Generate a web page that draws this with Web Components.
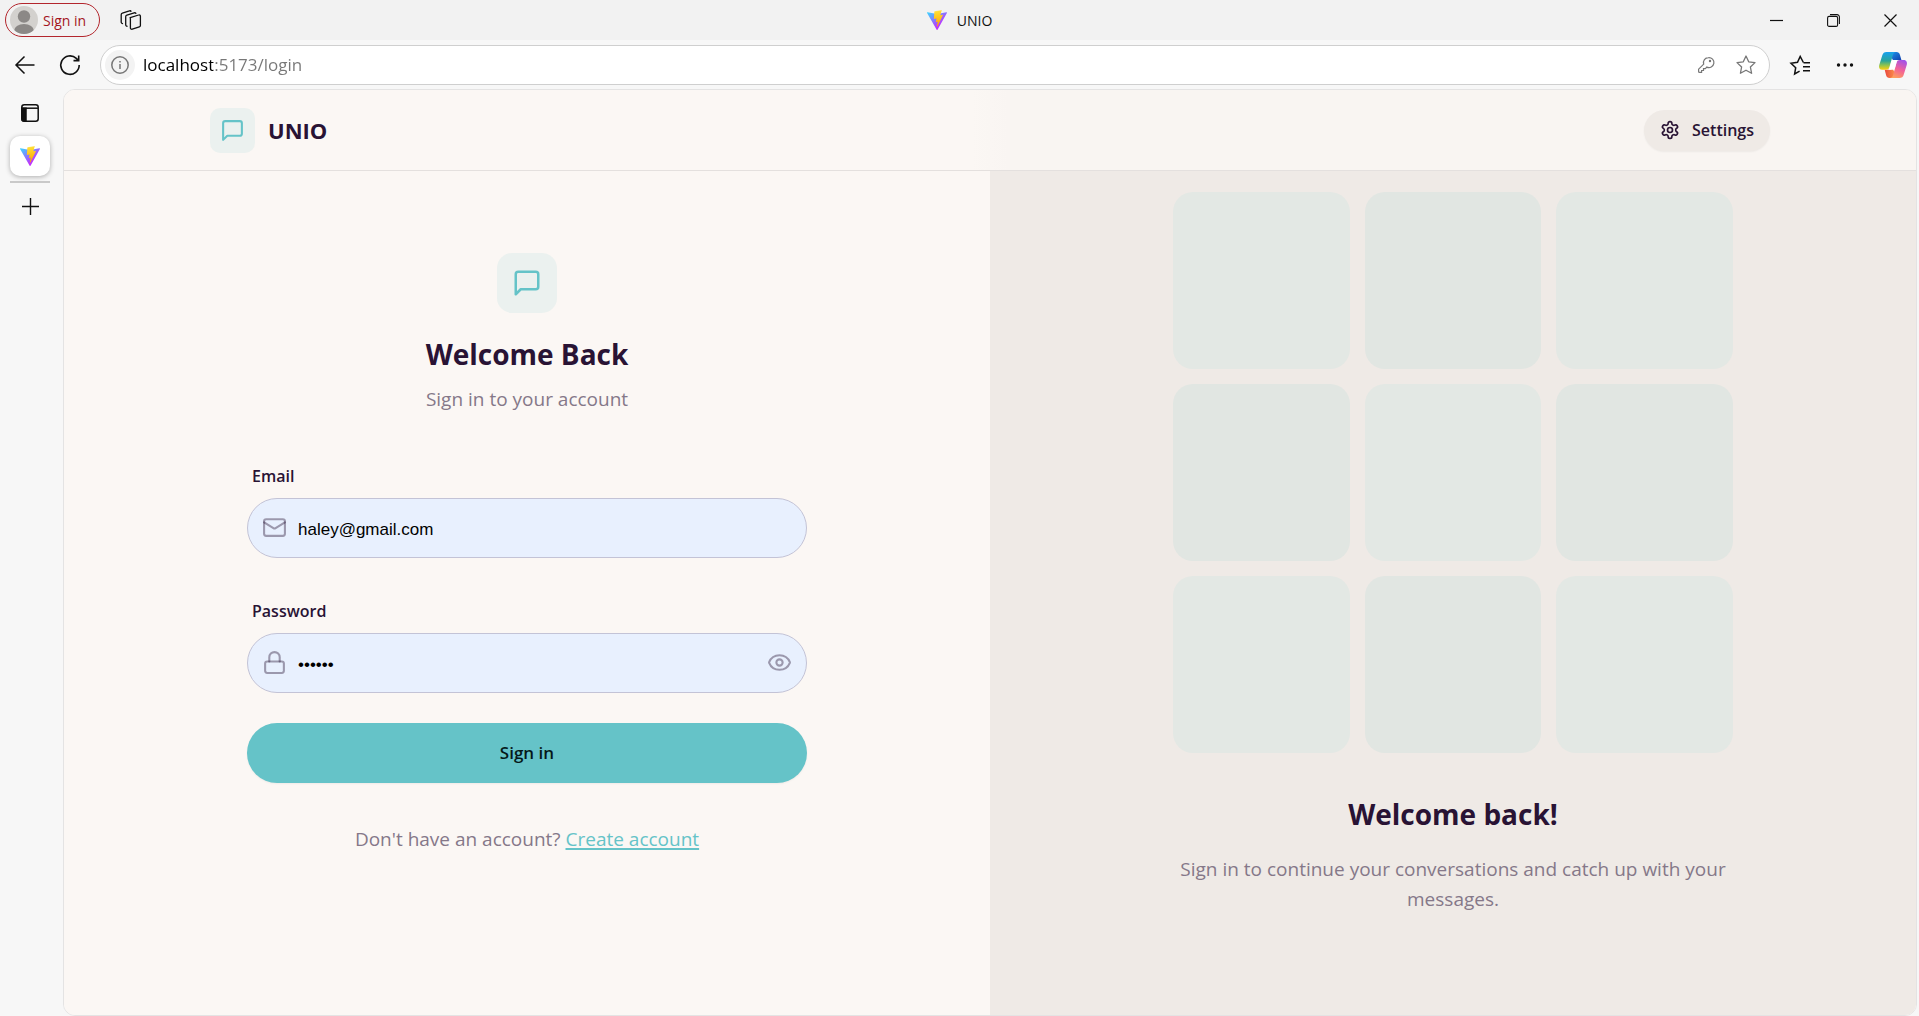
<!DOCTYPE html>
<html lang="en">
<head>
<meta charset="utf-8">
<title>UNIO</title>
<style>
html, body { height: 100%; margin: 0; }
body {
  --ink: #291334; --muted: #857889; --base: #fbf7f4; --base-2: #efeae6; --primary: #65c3c8;
  font-family: "Open Sans", "Noto Sans", sans-serif; color: #111; background: #f7f7f7;
}
</style>
</head>
<body>
<browser-window>
  <unio-app></unio-app>
</browser-window>

<script>
const define = (name, html, setup) => customElements.define(name, class extends HTMLElement {
  constructor() {
    super();
    this.attachShadow({ mode: 'open' });
  }
  connectedCallback() {
    if (this.shadowRoot.childNodes.length) return;
    const t = document.createElement('template');
    t.innerHTML = '<style>*{box-sizing:border-box}:host{display:block;box-sizing:border-box}button{font:inherit;color:inherit;border:0;background:none;padding:0;display:inline-flex;align-items:center;justify-content:center}</style>'
      + (typeof html === 'function' ? html(this) : html);
    this.shadowRoot.append(t.content.cloneNode(true));
    if (setup) setup(this, this.shadowRoot);
  }
});

/* name: [viewBox, stroke width, markup] */
const ICONS = {
  message: ['0 0 24 24', 2, '<path d="M21 15a2 2 0 0 1-2 2H7l-4 4V5a2 2 0 0 1 2-2h14a2 2 0 0 1 2 2z"/>'],
  settings: ['0 0 24 24', 2, '<path d="M12.22 2h-.44a2 2 0 0 0-2 2v.18a2 2 0 0 1-1 1.73l-.43.25a2 2 0 0 1-2 0l-.15-.08a2 2 0 0 0-2.73.73l-.22.38a2 2 0 0 0 .73 2.73l.15.1a2 2 0 0 1 1 1.72v.51a2 2 0 0 1-1 1.74l-.15.09a2 2 0 0 0-.73 2.73l.22.38a2 2 0 0 0 2.73.73l.15-.08a2 2 0 0 1 2 0l.43.25a2 2 0 0 1 1 1.73V20a2 2 0 0 0 2 2h.44a2 2 0 0 0 2-2v-.18a2 2 0 0 1 1-1.73l.43-.25a2 2 0 0 1 2 0l.15.08a2 2 0 0 0 2.73-.73l.22-.39a2 2 0 0 0-.73-2.73l-.15-.08a2 2 0 0 1-1-1.74v-.5a2 2 0 0 1 1-1.74l.15-.09a2 2 0 0 0 .73-2.73l-.22-.38a2 2 0 0 0-2.73-.73l-.15.08a2 2 0 0 1-2 0l-.43-.25a2 2 0 0 1-1-1.73V4a2 2 0 0 0-2-2z"/><circle cx="12" cy="12" r="3"/>'],
  mail: ['0 0 24 24', 2, '<rect width="20" height="16" x="2" y="4" rx="2"/><path d="m22 7-8.97 5.7a1.94 1.94 0 0 1-2.06 0L2 7"/>'],
  lock: ['0 0 24 24', 2, '<rect width="18" height="11" x="3" y="11" rx="2"/><path d="M7 11V7a5 5 0 0 1 10 0v4"/>'],
  eye: ['0 0 24 24', 2, '<path d="M2.06 12.35a1 1 0 0 1 0-.7 10.75 10.75 0 0 1 19.88 0 1 1 0 0 1 0 .7 10.75 10.75 0 0 1-19.88 0"/><circle cx="12" cy="12" r="3"/>'],
  workspaces: ['0 0 22 22', 1.3, '<path d="M10.2 8.7 18.6 6a1.3 1.3 0 0 1 1.8 1.2v9.2a1.6 1.6 0 0 1-1.1 1.5l-7 2.3a1.4 1.4 0 0 1-1.9-1.3V9.6z"/><path d="M7.500 17.200A1.400 1.400 0 0 1 5.700 16V7.800a1.700 1.700 0 0 1 1.200-1.600l7.300-2.400a1.400 1.400 0 0 1 1.800 1"/><path d="M3 14.500A1.400 1.400 0 0 1 1.200 13.300V5.800a1.700 1.700 0 0 1 1.200-1.600l7-2.300a1.400 1.400 0 0 1 1.800 .8"/>'],
  back: ['0 0 20 20', 1.5, '<path d="M19.500 10H1M9.500 1.500 1 10l8.500 8.500"/>'],
  reload: ['0 0 20 20', 1.6, '<path d="M19.200 10A9.200 9.200 0 1 1 16.300 3.400L18.500 5.500M18.700 .5V5.600H13.500"/>'],
  info: ['0 0 18 18', 1.5, '<circle cx="9" cy="9" r="8.200"/><path d="M9 8v5M9 5v1.400"/>'],
  key: ['0 0 16 16', 1.2, '<path d="M10.400 .6a5 5 0 0 0-4.700 6.500L.6 12.200v2.200a1 1 0 0 0 1 1h2v-1.900h1.900v-1.900h1.900l1.400-1.500A5 5 0 1 0 10.400 .6z"/><circle cx="12" cy="4" r=".6"/>'],
  star: ['0 0 20 20', 1.3, '<path d="m10 1 2.700 5.800 6.300.8-4.600 4.400 1.200 6.300L10 15.200l-5.600 3.100L5.600 12 1 7.600l6.300-.8z" stroke-linejoin="round"/>'],
  favorites: ['0 0 21 20', 1.5, '<path d="M13.400 7 10.200 1 7.500 6.800l-6.500.9 4.700 4.500-1.100 6.300 5-2.800M13.500 7.300H20M13 11.200h7M13 15.200h7"/>'],
  more: ['0 0 18 18', 0, '<g fill="currentColor"><circle cx="2.500" cy="9" r="1.700"/><circle cx="9" cy="9" r="1.700"/><circle cx="15.500" cy="9" r="1.700"/></g>'],
  minimize: ['0 0 13 13', 1.2, '<path d="M0 6.500h13"/>'],
  restore: ['0 0 13 13', 1.1, '<rect x=".6" y="2.400" width="10" height="10" rx="1.500"/><path d="M3 .6h7a2.400 2.400 0 0 1 2.400 2.400v7"/>'],
  close: ['0 0 13 13', 1.2, '<path d="m.5.5 12 12M12.500.5l-12 12"/>'],
  plus: ['0 0 17 17', 1.4, '<path d="M8.500 0v17M0 8.500h17"/>'],
  tabs: ['0 0 18 18', 1.5, '<rect x=".8" y=".8" width="16.400" height="16.400" rx="2.500"/><path d="M1 4.200h16"/><path d="M1 4.200h4V17H3a2 2 0 0 1-2-2z" fill="currentColor"/>'],
  avatar: ['0 0 28 28', 0, '<clipPath id="c"><circle cx="14" cy="14" r="14"/></clipPath><g clip-path="url(#c)"><rect width="28" height="28" fill="#d3d1ce"/><circle cx="14" cy="10.500" r="6.200" fill="#8b8886"/><ellipse cx="14" cy="25" rx="10" ry="7" fill="#8b8886"/></g>'],
  vite: ['0 0 256 257', 0, '<defs><linearGradient id="a" x1="-.8%" x2="57.600%" y1="7.700%" y2="78.400%"><stop offset="0" stop-color="#41d1ff"/><stop offset="1" stop-color="#bd34fe"/></linearGradient><linearGradient id="b" x1="43.400%" x2="50.300%" y1="2.200%" y2="89%"><stop offset="0" stop-color="#ffea83"/><stop offset=".083" stop-color="#ffdd35"/><stop offset="1" stop-color="#ffa800"/></linearGradient></defs><path fill="url(#a)" d="M255.200 37.900 134.900 252.980c-2.480 4.440-8.860 4.470-11.380.05L.9 37.960c-2.750-4.820 1.370-10.640 6.830-9.660l120.380 21.510a6.540 6.540 0 0 0 2.320 0l117.870-21.480c5.440-.99 9.590 4.790 6.900 9.570z"/><path fill="url(#b)" d="M185.430.06 96.440 17.500a3.270 3.270 0 0 0-2.630 3.010l-5.480 92.460a3.270 3.270 0 0 0 4 3.380l24.780-5.720c2.320-.53 4.410 1.510 3.940 3.840l-7.360 36.040c-.5 2.430 1.780 4.500 4.150 3.780l15.300-4.650c2.370-.72 4.650 1.360 4.150 3.790l-11.700 56.620c-.73 3.540 3.980 5.470 5.950 2.440l1.310-2.030 72.520-144.720c1.210-2.430-.88-5.190-3.540-4.680l-25.500 4.920c-2.400.46-4.430-1.770-3.760-4.110l16.650-57.700c.68-2.350-1.370-4.580-3.770-4.110z"/>'],
  copilot: ['0 0 28 27', 0, '<defs><linearGradient id="a" x1="0" y1="0" x2="0" y2="1"><stop offset="0" stop-color="#17a0ef"/><stop offset=".5" stop-color="#2aa59a"/><stop offset=".75" stop-color="#8fc34e"/><stop offset="1" stop-color="#ffcf0f"/></linearGradient><linearGradient id="b" x1=".7" y1="0" x2=".3" y2="1"><stop offset="0" stop-color="#a352e8"/><stop offset=".5" stop-color="#f2619a"/><stop offset="1" stop-color="#ffa05a"/></linearGradient><linearGradient id="d" x1="0" y1="0" x2="1" y2="1"><stop offset="0" stop-color="#1e9af0"/><stop offset="1" stop-color="#1038a8"/></linearGradient><linearGradient id="e" x1="0" y1="0" x2="1" y2="0"><stop offset="0" stop-color="#e9483e"/><stop offset="1" stop-color="#ffa04c"/></linearGradient></defs><path fill="url(#d)" d="M10 .5h7.500c1.800 0 2.900 1 3.400 2.700L22.400 8.500h-4.800c-1.400 0-2.300.5-2.900 1.500L12 5z"/><path fill="url(#e)" d="M18 26.500h-7.500c-1.800 0-2.900-1-3.400-2.700L5.700 18.200h4.800c1.400 0 2.300-.5 2.900-1.500l2.600 5z"/><path fill="url(#a)" d="M7.500.5H17c-1.800.2-2.700 1.400-3.200 3.200L10.300 16c-.5 1.500-1.600 2.200-3.200 2.200H3.200c-2.500 0-3.700-2-3-4.500L3.300 3.800C3.900 1.700 5.300.5 7.500.5z"/><path fill="url(#b)" d="M20.500 26.500H11c1.800-.2 2.700-1.400 3.200-3.200l3.500-12.600c.5-1.500 1.600-2.200 3.200-2.200h3.900c2.500 0 3.700 2.300 3 4.800l-3.100 9.900c-.6 2.100-2 3.300-4.200 3.300z"/><path fill="#fff" d="M14.300 8.500h4.100c-.4.500-.6 1.200-.8 2L15.800 17c-.3.800-.9 1.200-1.700 1.200h-4.300c.4-.4.600-1 .8-1.700l1.800-6.500c.3-1 .9-1.500 1.900-1.500z"/>']
};
define('ui-icon', el => {
  const [box, sw, body] = ICONS[el.getAttribute('name')];
  const size = el.getAttribute('size') || 24;
  return `<style>:host{display:inline-flex;flex:none}svg{display:block;width:${size}px;height:${size}px;overflow:visible}</style>
  <svg viewBox="${box}" fill="none" stroke="currentColor" stroke-width="${sw}" ${box === '0 0 24 24' ? 'stroke-linecap="round" stroke-linejoin="round"' : ''} aria-hidden="true">${body}</svg>`;
});

/* ---------- Browser chrome ---------- */
define('title-bar', `
<style>
:host{display:grid;grid-template-columns:1fr auto 1fr;align-items:center;height:40px;background:#f2f2f2;font-size:14px}
.left{display:flex;align-items:center;gap:20px;padding-left:5px;height:34px}
.profile{height:34px;border:1px solid #b3262d;border-radius:17px;padding:0 13px 0 4px;gap:5px;color:#a4151c}
.title{display:flex;align-items:center;gap:10px}
.controls{display:flex;justify-content:flex-end}
.controls button{width:57px;height:38px}
</style>
<div class="left"><button class="profile"><ui-icon name="avatar" size="28"></ui-icon>Sign in</button><button aria-label="Workspaces"><ui-icon name="workspaces" size="22"></ui-icon></button></div>
<div class="title"><ui-icon name="vite" size="20"></ui-icon><span>UNIO</span></div>
<div class="controls"><button aria-label="Minimize"><ui-icon name="minimize" size="13"></ui-icon></button><button aria-label="Restore"><ui-icon name="restore" size="13"></ui-icon></button><button aria-label="Close"><ui-icon name="close" size="13"></ui-icon></button></div>`);

define('address-bar', `
<style>
:host{flex:1;display:flex;align-items:center;height:40px;padding:0 13px 0 4px;background:#fff;border:1px solid #cfcfcf;border-radius:20px;color:#777}
.info{width:30px;height:30px;border-radius:50%;background:#f3f3f3}
input{flex:1;min-width:0;height:30px;margin-left:8px;padding:0 0 2px;border:0;outline:0;font:17px/24px "Open Sans",sans-serif;color:#777;background:linear-gradient(90deg,#000 70px,#777 70px);-webkit-background-clip:text;background-clip:text;-webkit-text-fill-color:transparent}
.actions{display:flex;gap:22px}
</style>
<button class="info" aria-label="Site information"><ui-icon name="info" size="18"></ui-icon></button>
<input type="text" aria-label="Address" value="localhost:5173/login">
<div class="actions"><button aria-label="Passwords"><ui-icon name="key" size="16"></ui-icon></button><button aria-label="Add to favorites"><ui-icon name="star" size="20"></ui-icon></button></div>`);

define('tool-bar', `
<style>
:host{display:flex;align-items:center;height:50px;padding:0 12px 0 15px;background:#f7f7f7}
.nav{display:flex;gap:25px;margin-right:20px}
.tools{display:flex;align-items:center;gap:25px;margin-left:20px}
</style>
<div class="nav"><button aria-label="Back"><ui-icon name="back" size="20"></ui-icon></button><button aria-label="Refresh"><ui-icon name="reload" size="20"></ui-icon></button></div>
<address-bar></address-bar>
<div class="tools"><button aria-label="Favorites"><ui-icon name="favorites" size="21"></ui-icon></button><button aria-label="More"><ui-icon name="more" size="18"></ui-icon></button><button aria-label="Copilot"><ui-icon name="copilot" size="28"></ui-icon></button></div>`);

define('tab-rail', `
<style>
:host{display:flex;flex-direction:column;align-items:center;width:60px;padding-top:14px}
.tab{width:40px;height:40px;margin-top:14px;border-radius:10px;background:#fff;box-shadow:0 1px 5px rgba(0,0,0,.3)}
hr{width:40px;height:2px;margin:5px 0 15px;border:0;background:#c9c9c9}
</style>
<button aria-label="Tab actions"><ui-icon name="tabs" size="18"></ui-icon></button>
<button class="tab" aria-label="Open tab"><ui-icon name="vite" size="20"></ui-icon></button>
<hr>
<button aria-label="New tab"><ui-icon name="plus" size="17"></ui-icon></button>`);

define('browser-window', `
<style>
:host{display:flex;flex-direction:column;min-height:100%}
.body{flex:1;display:flex;padding:0 2px 0 0;margin-top:-1px}
.view{flex:1;display:flex;margin-left:3px;border:1px solid #e4e3e3;border-radius:12px;overflow:hidden}
::slotted(*){flex:1}
tab-rail{padding-top:15px}
</style>
<title-bar></title-bar><tool-bar></tool-bar>
<div class="body"><tab-rail></tab-rail><main class="view"><slot></slot></main></div>`);

/* ---------- UNIO app ---------- */
define('brand-mark', el => {
  const large = el.hasAttribute('large');
  return `<style>:host{display:grid;place-items:center;width:${large ? 60 : 45}px;height:${large ? 60 : 45}px;border-radius:${large ? 15 : 10}px;background:rgba(101,195,200,.1);color:var(--primary)}</style>
  <ui-icon name="message" size="${large ? 30 : 25}"></ui-icon>`;
});

define('app-header', `
<style>
:host{background:linear-gradient(90deg,var(--base) 49%,#f9f5f2 51%);border-bottom:1px solid #e4e0de;height:81px;color:var(--ink)}
.inner{display:flex;align-items:center;justify-content:space-between;max-width:1600px;height:100%;margin:0 auto;padding:0 20px}
.brand{display:flex;align-items:center;gap:13px;color:inherit;text-decoration:none}
h1{margin:0;font-size:22px;line-height:30px;font-weight:700}
.settings{height:41px;padding:0 16px;gap:12px;border-radius:21px;background:var(--base-2);box-shadow:0 1px 2px rgba(0,0,0,.05);font-size:16px;font-weight:600}
</style>
<div class="inner"><a class="brand" href="#"><brand-mark></brand-mark><h1>UNIO</h1></a>
<button class="settings"><ui-icon name="settings" size="20"></ui-icon>Settings</button></div>`);

define('text-field', el => `
<style>
label{display:block;padding:11px 5px 9px;font-size:16px;line-height:25px;font-weight:600;color:var(--ink)}
.box{display:flex;align-items:center;height:60px;padding:0 14px;border:1px solid #c3c3d6;border-radius:30px;background:#e8f0fe;color:rgba(41,19,52,.4)}
input{flex:1;min-width:0;height:40px;margin:0 0 0 11px;padding:4px 0 0;border:0;outline:0;background:none;color:#000;font:17px "Liberation Sans",Arial,sans-serif}
</style>
<label for="field">${el.getAttribute('label')}</label>
<div class="box"><ui-icon name="${el.getAttribute('icon')}" size="25"></ui-icon>
<input id="field" type="${el.getAttribute('type')}" value="${el.getAttribute('value')}">
${el.getAttribute('type') === 'password' ? '<button type="button" aria-label="Show password"><ui-icon name="eye" size="25"></ui-icon></button>' : ''}</div>`);

define('login-form', `
<style>
:host{width:100%;max-width:560px;color:var(--muted);font-size:19px;line-height:30px}
header{display:flex;flex-direction:column;align-items:center;text-align:center}
h2{margin:21px 0 10px;font-size:28px;line-height:40px;font-weight:700;color:var(--ink)}
p{margin:0;text-align:center}
form{display:flex;flex-direction:column;gap:30px;margin:39px 0 41px}
.submit{height:60px;border-radius:30px;background:var(--primary);color:#06181a;font-size:17px;font-weight:600;box-shadow:0 1px 2px rgba(0,0,0,.05)}
a{color:var(--primary);text-decoration-thickness:2px;text-underline-offset:2px}
</style>
<header><brand-mark large></brand-mark><h2>Welcome Back</h2><p>Sign in to your account</p></header>
<form>
<text-field label="Email" icon="mail" type="email" value="haley@gmail.com"></text-field>
<text-field label="Password" icon="lock" type="password" value="secret"></text-field>
<button class="submit" type="button">Sign in</button>
</form>
<p>Don't have an account? <a href="#">Create account</a></p>`);

define('pattern-panel', `
<style>
:host{width:100%;max-width:560px;text-align:center}
.grid{display:grid;grid-template-columns:repeat(3,1fr);gap:15px}
.grid i{aspect-ratio:1;border-radius:20px;background:#e3e8e4}
.grid i:nth-child(even){background:#e1e6e2}
h2{margin:41px 0 20px;font-size:28px;line-height:40px;font-weight:700;color:var(--ink)}
p{margin:0;font-size:19px;line-height:30px;color:var(--muted)}
</style>
<div class="grid"><i></i><i></i><i></i><i></i><i></i><i></i><i></i><i></i><i></i></div>
<h2><slot name="heading"></slot></h2><p><slot></slot></p>`);

define('unio-app', `
<style>
:host{display:grid;background:var(--base)}
app-header{grid-area:1/1;align-self:start;z-index:1}
.page{grid-area:1/1;display:grid;grid-template-columns:1fr 1fr}
.page>div{display:grid;place-items:center;padding-top:1px}
.aside{background:var(--base-2)}
</style>
<app-header></app-header>
<div class="page"><div><login-form></login-form></div>
<div class="aside"><pattern-panel><span slot="heading">Welcome back!</span>Sign in to continue your conversations and catch up with your messages.</pattern-panel></div></div>`);
</script>
</body>
</html>
